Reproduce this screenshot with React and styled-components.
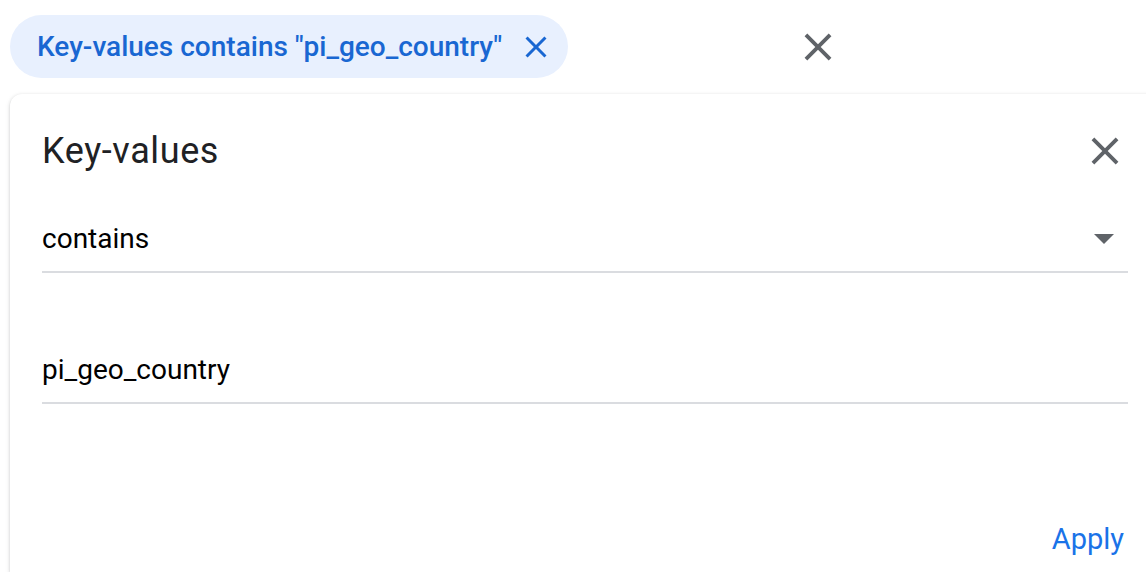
import React from "react";
import styled, { createGlobalStyle } from "styled-components";

const Global = createGlobalStyle`
  html, body { margin: 0; padding: 0; background: #fff; overflow: hidden; }
  body { font-family: Roboto, "Noto Sans", Arial, sans-serif; }
`;

const Page = styled.div`
  width: 1146px;
  height: 572px;
  overflow: hidden;
  display: flex;
  flex-direction: column;
`;

const TopBar = styled.div`
  height: 94px;
  display: flex;
  align-items: flex-start;
  padding-left: 10px;
`;

const Chip = styled.div`
  margin-top: 15px;
  height: 63px;
  box-sizing: border-box;
  display: flex;
  align-items: center;
  gap: 16px;
  padding: 0 14px 0 27px;
  border-radius: 32px;
  background: #e8f0fe;
  color: #1967d2;
  font-size: 28px;
  font-weight: 500;
  white-space: nowrap;
`;

const IconButton = styled.button`
  border: 0;
  padding: 0;
  background: transparent;
  display: flex;
  align-items: center;
  justify-content: center;
  width: ${(p) => p.size}px;
  height: ${(p) => p.size}px;
  color: ${(p) => p.color || "#5f6368"};
  margin-left: ${(p) => p.ml || 0}px;
  margin-top: ${(p) => p.mt || 0}px;
  cursor: pointer;
`;

const Panel = styled.div`
  margin-left: 10px;
  width: 1150px;
  flex: 1;
  box-sizing: border-box;
  padding: 28px 32px 0 32px;
  background: #fff;
  border-radius: 12px 0 0 0;
  box-shadow: 0 1px 3px rgba(60, 64, 67, 0.25), 0 2px 6px rgba(60, 64, 67, 0.08);
  display: flex;
  flex-direction: column;
`;

const TitleRow = styled.div`
  height: 58px;
  display: flex;
  align-items: center;
  justify-content: space-between;
`;

const Title = styled.h2`
  margin: 0;
  font-size: 36px;
  font-weight: 400;
  line-height: 58px;
  color: #202124;
  letter-spacing: 0.6px;
`;

const Field = styled.div`
  margin-top: ${(p) => p.mt}px;
  height: 60px;
  box-sizing: border-box;
  padding-bottom: 7px;
  border-bottom: 2px solid #dadce0;
  display: flex;
  align-items: center;
  justify-content: space-between;
  font-size: 28px;
  color: #000;
`;

const Caret = styled.span`
  width: 0;
  height: 0;
  margin-right: 14px;
  border-left: 10px solid transparent;
  border-right: 10px solid transparent;
  border-top: 10px solid #5f6368;
`;

const Footer = styled.div`
  margin-top: 115px;
  display: flex;
  justify-content: flex-end;
`;

const TextButton = styled.button`
  border: 0;
  background: transparent;
  padding: 0 4px;
  height: 40px;
  line-height: 40px;
  font-family: Roboto, Arial, sans-serif;
  font-size: 29px;
  font-weight: 400;
  color: #1a73e8;
  cursor: pointer;
`;

const CloseIcon = ({ size }) => (
  <svg width={size} height={size} viewBox="0 0 24 24" fill="currentColor">
    <path d="M19 6.41 17.59 5 12 10.59 6.41 5 5 6.41 10.59 12 5 17.59 6.41 19 12 13.41 17.59 19 19 17.59 13.41 12z" />
  </svg>
);

export default function App() {
  return (
    <Page>
      <Global />
      <TopBar>
        <Chip>
          Key-values contains "pi_geo_country"
          <IconButton size={36} color="#1967d2">
            <CloseIcon size={36} />
          </IconButton>
        </Chip>
        <IconButton size={46} ml={227} mt={24}>
          <CloseIcon size={46} />
        </IconButton>
      </TopBar>
      <Panel>
        <TitleRow>
          <Title>Key-values</Title>
          <IconButton size={46}>
            <CloseIcon size={46} />
          </IconButton>
        </TitleRow>
        <Field mt={33}>
          <span>contains</span>
          <Caret />
        </Field>
        <Field mt={71}>
          <span>pi_geo_country</span>
        </Field>
        <Footer>
          <TextButton>Apply</TextButton>
        </Footer>
      </Panel>
    </Page>
  );
}
